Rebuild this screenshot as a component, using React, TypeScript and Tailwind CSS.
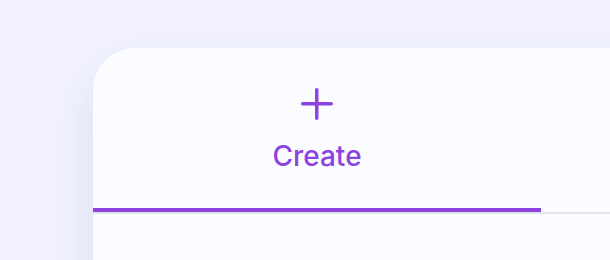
export default function App() {
  return (
    <div className="w-[610px] h-[260px] overflow-hidden bg-[#f1f2fd] pt-[48px] pl-[93px]" style={{ fontFamily: 'Inter, "Noto Sans", sans-serif' }}>
      <div className="w-[620px] h-[300px] shrink-0 bg-[#fbfcff] rounded-tl-[42px] shadow-[0_20px_50px_rgba(60,60,150,0.10)]">
        <div className="flex">
          <button className="w-[448px] h-[164px] border-b-4 border-[#8c43e0] flex flex-col items-center pt-[40px]">
            <svg width="32" height="32" viewBox="0 0 32 32" fill="none" stroke="#8c43e0" strokeWidth="3.5" strokeLinecap="round">
              <path d="M1.75 15.75h28.5M15.75 1.75v28.5" />
            </svg>
            <span className="mt-[22px] text-[28px] leading-[28px] font-medium text-[#8c43e0]">Create</span>
          </button>
        </div>
        <div className="h-[2px] bg-[#e4e5eb]" />
      </div>
    </div>
  );
}
